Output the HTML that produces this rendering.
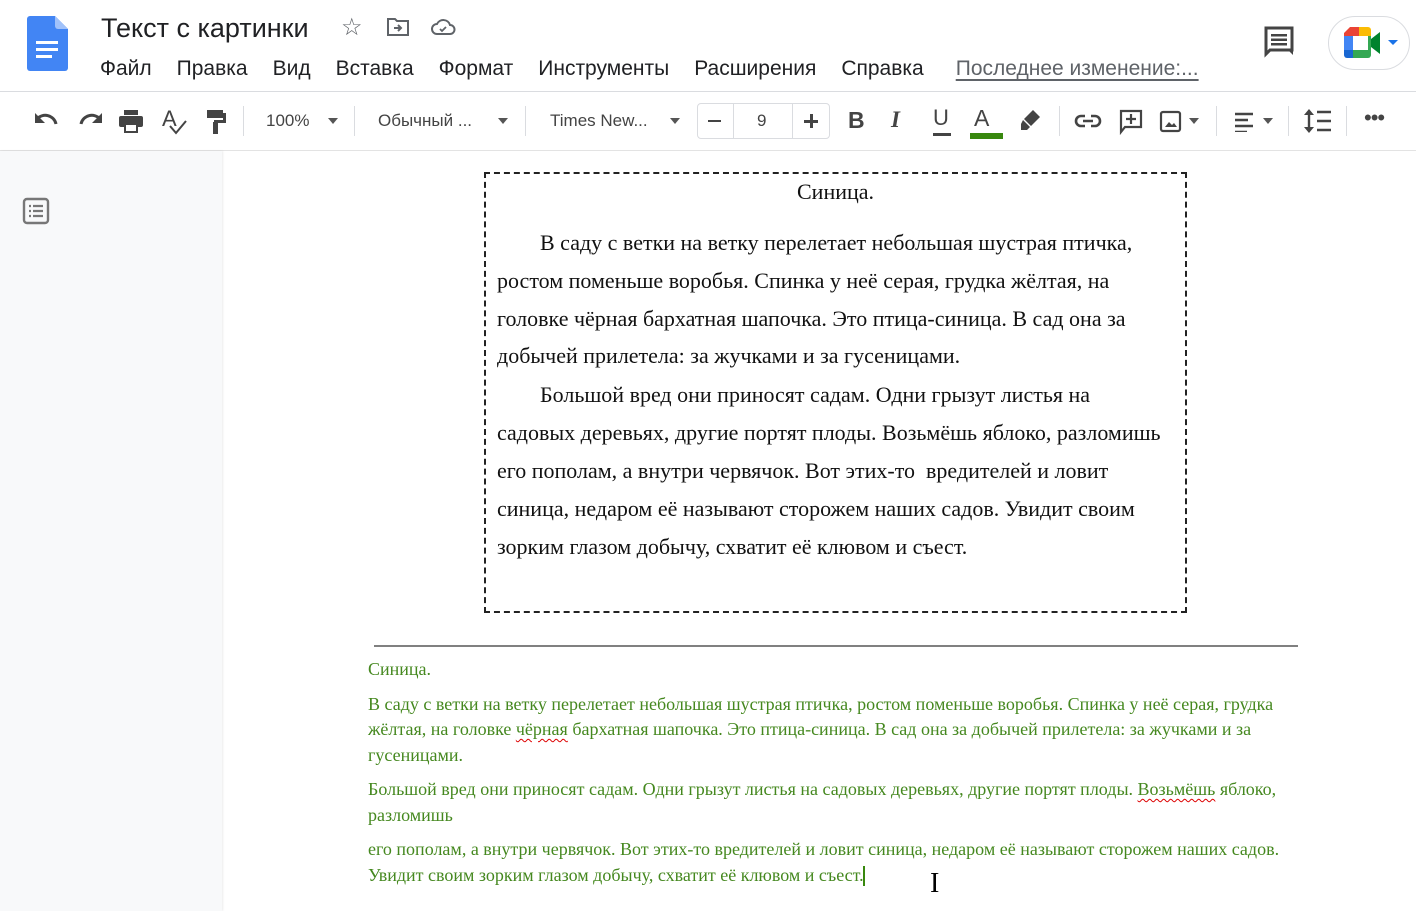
<!DOCTYPE html>
<html><head><meta charset="utf-8"><style>
*{margin:0;padding:0;box-sizing:border-box}
body{width:1416px;height:911px;overflow:hidden;background:#fff;font-family:"Liberation Sans",Arial,sans-serif;position:relative;color:#3c4043}
.a{position:absolute;white-space:nowrap}
.menu span{margin-right:25px}
.ic{position:absolute;fill:#444746}
.sep{position:absolute;top:106px;width:1px;height:30px;background:#dadce0}
.img{font-family:"Liberation Serif","Times New Roman",serif;font-size:22px;color:#111}
.g{font-family:"Liberation Serif","Times New Roman",serif;font-size:18px;color:#45881f}
.wavy{text-decoration:underline wavy #d00;text-decoration-thickness:1px;text-underline-offset:3px}
</style></head><body>
<svg class="a" style="left:27px;top:16px" width="41" height="55" viewBox="0 0 41 55"><path d="M3 0h25l13 13v39a3 3 0 0 1-3 3H3a3 3 0 0 1-3-3V3a3 3 0 0 1 3-3z" fill="#4285f4"/><path d="M28 0l13 13H31a3 3 0 0 1-3-3z" fill="#a1c2fa"/><rect x="9" y="25" width="22" height="3" fill="#fff"/><rect x="9" y="32" width="22" height="3" fill="#fff"/><rect x="9" y="39" width="16" height="3" fill="#fff"/></svg>
<div class="a" style="left:101px;top:13px;font-size:27px;color:#202124">Текст с картинки</div>
<div class="a" style="left:341px;top:13px;font-size:24px;color:#5f6368">☆</div>
<svg class="a" style="left:386px;top:17px" width="24" height="20" viewBox="0 0 24 20"><path d="M2 2h7l2 2h11v14H2z" fill="none" stroke="#5f6368" stroke-width="2"/><path d="M8 11h7M12 8l3 3-3 3" fill="none" stroke="#5f6368" stroke-width="2"/></svg>
<svg class="a" style="left:430px;top:18px" width="26" height="18" viewBox="0 0 26 18"><path d="M7 16a5 5 0 0 1 0-10 7 7 0 0 1 13 1 4.5 4.5 0 0 1 0 9z" fill="none" stroke="#5f6368" stroke-width="2"/><path d="M10 11l2 2 4-4" fill="none" stroke="#5f6368" stroke-width="1.8"/></svg>
<div class="a menu" style="left:100px;top:57px;font-size:21px;color:#202124"><span>Файл</span><span>Правка</span><span>Вид</span><span>Вставка</span><span>Формат</span><span>Инструменты</span><span>Расширения</span><span style="margin-right:32px">Справка</span><span style="color:#5f6368;text-decoration:underline;text-underline-offset:4px">Последнее изменение:...</span></div>
<svg class="a" style="left:1264px;top:26px" width="32" height="32" viewBox="0 0 32 32"><path d="M2 2h26v22H6l-4 4z" fill="none" stroke="#444" stroke-width="3"/><rect x="7" y="8" width="16" height="2.5" fill="#444"/><rect x="7" y="12.5" width="16" height="2.5" fill="#444"/><rect x="7" y="17" width="16" height="2.5" fill="#444"/><path d="M24 24h5v5z" fill="#444"/></svg>
<div class="a" style="left:1328px;top:16px;width:82px;height:54px;border:1px solid #dadce0;border-radius:27px"></div>
<svg class="a" style="left:1344px;top:27px" width="58" height="32" viewBox="0 0 58 32"><path d="M6 0h18v9H9v14H0V6z" fill="#ea4335"/><rect x="0" y="9" width="9" height="14" fill="#4285f4"/><path d="M0 23h9v8H3a3 3 0 0 1-3-3z" fill="#1967d2"/><path d="M9 23h15v8H9z" fill="#34a853"/><path d="M15 0h9a3 3 0 0 1 3 3v6H15z" fill="#fbbc04"/><path d="M24 9h3v19a3 3 0 0 1-3 3z" fill="#34a853"/><path d="M27 12l9-7v22l-9-7z" fill="#00832d"/><path d="M44 13h10l-5 5z" fill="#1a73e8"/></svg>
<div class="a" style="left:0;top:91px;width:1416px;height:1px;background:#dadce0"></div>
<svg class="ic" style="left:34px;top:111px" width="26" height="20" viewBox="0 0 26 20"><path d="M3 8a11 11 0 0 1 19 5" fill="none" stroke="#444" stroke-width="3"/><path d="M1 2v10h10z" fill="#444"/></svg>
<svg class="ic" style="left:77px;top:111px" width="26" height="20" viewBox="0 0 26 20"><path d="M23 8a11 11 0 0 0-19 5" fill="none" stroke="#444" stroke-width="3"/><path d="M25 2v10H15z" fill="#444"/></svg>
<svg class="ic" style="left:118px;top:110px" width="26" height="24" viewBox="0 0 26 24"><rect x="6" y="0" width="14" height="5" fill="#444"/><rect x="1" y="6" width="24" height="11" rx="2" fill="#444"/><rect x="6" y="13" width="14" height="10" fill="#444"/><rect x="8" y="15" width="10" height="6" fill="#fff"/></svg>
<div class="a" style="left:162px;top:106px;font-size:22px;color:#444">A</div>
<svg class="a" style="left:168px;top:120px" width="20" height="16" viewBox="0 0 20 16"><path d="M2 6l6 7 10-12" fill="none" stroke="#444" stroke-width="2"/></svg>
<svg class="ic" style="left:205px;top:110px" width="22" height="24" viewBox="0 0 22 24"><rect x="2" y="0" width="16" height="8" fill="#444"/><rect x="18" y="3" width="3" height="8" fill="#444"/><rect x="9" y="10" width="12" height="3" fill="#444"/><rect x="8" y="12" width="5" height="12" fill="#444"/></svg>
<div class="sep" style="left:243px"></div>
<div class="a" style="left:266px;top:111px;font-size:17px;color:#444">100%</div>
<div class="a" style="left:328px;top:118px;border:5px solid transparent;border-top:6px solid #555"></div>
<div class="sep" style="left:354px"></div>
<div class="a" style="left:378px;top:111px;font-size:17px;color:#444">Обычный ...</div>
<div class="a" style="left:498px;top:118px;border:5px solid transparent;border-top:6px solid #555"></div>
<div class="sep" style="left:525px"></div>
<div class="a" style="left:550px;top:111px;font-size:17px;color:#444">Times New...</div>
<div class="a" style="left:670px;top:118px;border:5px solid transparent;border-top:6px solid #555"></div>
<div class="a" style="left:697px;top:103px;width:133px;height:36px;border:1px solid #dadce0;border-radius:4px"></div>
<div class="a" style="left:733px;top:103px;width:1px;height:36px;background:#dadce0"></div>
<div class="a" style="left:792px;top:103px;width:1px;height:36px;background:#dadce0"></div>
<div class="a" style="left:708px;top:120px;width:13px;height:2px;background:#444"></div>
<div class="a" style="left:757px;top:111px;font-size:17px;color:#444">9</div>
<div class="a" style="left:804px;top:120px;width:14px;height:2.5px;background:#444"></div>
<div class="a" style="left:810px;top:114px;width:2.5px;height:14px;background:#444"></div>
<div class="a" style="left:848px;top:107px;font-size:23px;font-weight:bold;color:#444">B</div>
<div class="a" style="left:891px;top:107px;font-size:23px;font-style:italic;font-weight:bold;color:#444;font-family:'Liberation Serif',serif">I</div>
<div class="a" style="left:933px;top:105px;font-size:22px;color:#444">U</div>
<div class="a" style="left:933px;top:133px;width:18px;height:3px;background:#444"></div>
<div class="a" style="left:974px;top:105px;font-size:23px;color:#444">A</div>
<div class="a" style="left:970px;top:133px;width:33px;height:6px;background:#38880e"></div>
<svg class="ic" style="left:1019px;top:108px" width="24" height="24" viewBox="0 0 24 24"><path d="M14 2l7 7-9 9-7-7z" fill="#444"/><path d="M4 12l7 7-3 3H2v-6z" fill="#444"/></svg>
<div class="sep" style="left:1059px"></div>
<svg class="ic" style="left:1074px;top:112px" width="28" height="18" viewBox="0 0 28 18"><path d="M11 4H7a5 5 0 0 0 0 10h4M17 4h4a5 5 0 0 1 0 10h-4M9 9h10" fill="none" stroke="#444" stroke-width="2.6"/></svg>
<svg class="ic" style="left:1119px;top:109px" width="24" height="26" viewBox="0 0 24 26"><path d="M2 2h20v16H6l-4 5z" fill="none" stroke="#444" stroke-width="2.2"/><path d="M12 5v10M7 10h10" stroke="#444" stroke-width="2.2"/></svg>
<svg class="ic" style="left:1159px;top:110px" width="24" height="24" viewBox="0 0 24 24"><rect x="2" y="2" width="19" height="19" rx="2" fill="none" stroke="#444" stroke-width="2.2"/><path d="M6 17l4-5 3 3 2-2 3 4z" fill="#444"/></svg>
<div class="a" style="left:1189px;top:118px;border:5px solid transparent;border-top:6px solid #555"></div>
<div class="sep" style="left:1216px"></div>
<svg class="ic" style="left:1235px;top:112px" width="22" height="20" viewBox="0 0 22 20"><path d="M0 2h18M0 8h13M0 14h18M0 20h12" stroke="#444" stroke-width="2.6"/></svg>
<div class="a" style="left:1263px;top:118px;border:5px solid transparent;border-top:6px solid #555"></div>
<div class="sep" style="left:1288px"></div>
<svg class="ic" style="left:1303px;top:108px" width="30" height="26" viewBox="0 0 30 26"><path d="M6 3v20" stroke="#444" stroke-width="2.4"/><path d="M1 7l5-6 5 6zM1 19l5 6 5-6z" fill="#444"/><path d="M14 4h14M14 13h14M14 22h14" stroke="#444" stroke-width="2.6"/></svg>
<div class="sep" style="left:1346px"></div>
<div class="a" style="left:1364px;top:105px;font-size:22px;color:#444;letter-spacing:-1px">•••</div>
<div class="a" style="left:0;top:150px;width:1416px;height:1px;background:#e3e3e3"></div>
<div class="a" style="left:0;top:151px;width:222px;height:760px;background:#f8f9fa;box-shadow:1px 0 2px rgba(0,0,0,.08)"></div>
<svg class="a" style="left:22px;top:197px" width="28" height="28" viewBox="0 0 28 28"><rect x="2" y="2" width="24" height="24" rx="3" fill="none" stroke="#777" stroke-width="2.4"/><path d="M7 9h2M11 9h10M7 14h2M11 14h10M7 19h2M11 19h10" stroke="#777" stroke-width="2.2"/></svg>
<div class="a" style="left:484px;top:172px;width:703px;height:441px;border:2px dashed #222"></div>
<div class="a img" style="left:797px;top:179px">Синица.</div>
<div class="a img" style="left:540px;top:230px">В саду с ветки на ветку перелетает небольшая шустрая птичка,</div>
<div class="a img" style="left:497px;top:268px">ростом поменьше воробья. Спинка у неё серая, грудка жёлтая, на</div>
<div class="a img" style="left:497px;top:306px">головке чёрная бархатная шапочка. Это птица-синица. В сад она за</div>
<div class="a img" style="left:497px;top:343px">добычей прилетела: за жучками и за гусеницами.</div>
<div class="a img" style="left:540px;top:382px">Большой вред они приносят садам. Одни грызут листья на</div>
<div class="a img" style="left:497px;top:420px">садовых деревьях, другие портят плоды. Возьмёшь яблоко, разломишь</div>
<div class="a img" style="left:497px;top:458px">его пополам, а внутри червячок. Вот этих-то &nbsp;вредителей и ловит</div>
<div class="a img" style="left:497px;top:496px">синица, недаром её называют сторожем наших садов. Увидит своим</div>
<div class="a img" style="left:497px;top:534px">зорким глазом добычу, схватит её клювом и съест.</div>
<div class="a" style="left:374px;top:645px;width:924px;height:2px;background:#808080"></div>
<div class="a g" style="left:368px;top:659px">Синица.</div>
<div class="a g" style="left:368px;top:694px">В саду с ветки на ветку перелетает небольшая шустрая птичка, ростом поменьше воробья. Спинка у неё серая, грудка</div>
<div class="a g" style="left:368px;top:719px">жёлтая, на головке <span class="wavy">чёрная</span> бархатная шапочка. Это птица-синица. В сад она за добычей прилетела: за жучками и за</div>
<div class="a g" style="left:368px;top:745px">гусеницами.</div>
<div class="a g" style="left:368px;top:779px">Большой вред они приносят садам. Одни грызут листья на садовых деревьях, другие портят плоды. <span class="wavy">Возьмёшь</span> яблоко,</div>
<div class="a g" style="left:368px;top:805px">разломишь</div>
<div class="a g" style="left:368px;top:839px">его пополам, а внутри червячок. Вот этих-то вредителей и ловит синица, недаром её называют сторожем наших садов.</div>
<div class="a g" style="left:368px;top:865px">Увидит своим зорким глазом добычу, схватит её клювом и съест.</div>
<div class="a" style="left:863px;top:866px;width:2px;height:20px;background:#38880e"></div>
<div class="a" style="left:930px;top:868px;font-size:28px;color:#000;font-family:'Liberation Serif',serif">I</div>
</body></html>
